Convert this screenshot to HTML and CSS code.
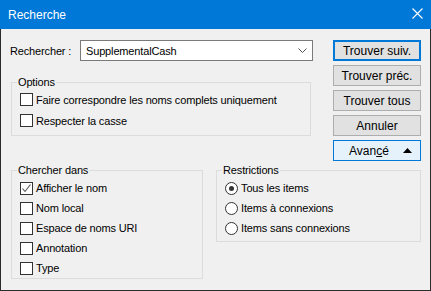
FILE: index.html
```html
<!DOCTYPE html>
<html lang="fr">
<head>
  <meta charset="UTF-8" />
  <title>Recherche</title>
  <link rel="stylesheet" href="styles.css">
</head>
<body>
  <div class="window">
    <div class="titlebar">
      <span class="title">Recherche</span>
      <svg class="close" width="11" height="11" viewBox="0 0 11 11">
        <path d="M0.5 0.5 L10.5 10.5 M10.5 0.5 L0.5 10.5" stroke="#fff" stroke-width="1.1" fill="none"/>
      </svg>
    </div>

    <div class="content">
      <div class="top">
        <div class="left-col">
          <div class="search-row">
            <span class="label">Rechercher :</span>
            <div class="combo">
              <span>SupplementalCash</span>
              <svg width="9" height="5" viewBox="0 0 9 5">
                <polyline points="0.5,0.5 4.5,4.5 8.5,0.5" stroke="#555" fill="none"/>
              </svg>
            </div>
          </div>

          <fieldset class="group options">
            <legend>Options</legend>
            <div class="row"><span class="box"></span>Faire correspondre les noms complets uniquement</div>
            <div class="row"><span class="box"></span>Respecter la casse</div>
          </fieldset>
        </div>

        <div class="buttons">
          <button class="btn default">Trouver suiv.</button>
          <button class="btn">Trouver préc.</button>
          <button class="btn">Trouver tous</button>
          <button class="btn">Annuler</button>
          <button class="btn advanced">Avan<u>c</u>é
            <svg class="arrow" width="9" height="5" viewBox="0 0 9 5"><polygon points="0,5 4.5,0 9,5" fill="#000"/></svg>
          </button>
        </div>
      </div>

      <div class="bottom">
        <fieldset class="group look-in">
          <legend>Chercher dans</legend>
          <div class="row small"><span class="box checked">
            <svg width="11" height="11" viewBox="0 0 11 11"><polyline points="1.5,5.5 4,8.5 9.5,1.5" stroke="#555" stroke-width="1.1" fill="none"/></svg>
          </span>Afficher le nom</div>
          <div class="row small"><span class="box"></span>Nom local</div>
          <div class="row small"><span class="box"></span>Espace de noms URI</div>
          <div class="row small"><span class="box"></span>Annotation</div>
          <div class="row small"><span class="box"></span>Type</div>
        </fieldset>

        <fieldset class="group restrictions">
          <legend>Restrictions</legend>
          <div class="row small"><span class="radio on"></span>Tous les items</div>
          <div class="row small"><span class="radio"></span>Items à connexions</div>
          <div class="row small"><span class="radio"></span>Items sans connexions</div>
        </fieldset>
      </div>
    </div>
  </div>
</body>
</html>
```

FILE: styles.css
```css
body {
  margin: 0;
  font-family: "Liberation Sans", Arial, sans-serif;
  font-size: 11px;
  letter-spacing: -0.15px;
  color: #000;
  background: #f0f0f0;
}
.window {
  width: 429px;
  height: 290px;
  border: 1px solid #2b2b2b;
  border-top: 0;
  background: #f0f0f0;
}
.titlebar {
  display: flex;
  align-items: center;
  justify-content: space-between;
  height: 29px;
  margin: 0 -1px;
  padding: 0 8px 0 8px;
  background: #0078d7;
  color: #fff;
  font-size: 12px;
  letter-spacing: 0;
}
.close {
  margin-top: -2px;
}
.content {
  padding: 11px 9px 0 9px;
}
.top {
  display: flex;
  align-items: flex-start;
}
.left-col {
  width: 303px;
}
.search-row {
  display: flex;
  align-items: center;
  height: 21px;
}
.label {
  width: 70px;
}
.combo {
  flex: 1;
  display: flex;
  align-items: center;
  justify-content: space-between;
  height: 19px;
  padding: 0 5px 0 5px;
  border: 1px solid #7a7a7a;
  background: #fff;
}
.group {
  margin: 0;
  border: 1px solid #dcdcdc;
  padding: 0 8px;
}
.group legend {
  padding: 0 1px;
  margin-left: -3px;
  line-height: 14px;
}
.options {
  margin: 14px 0 0 1px;
  width: 300px;
  box-sizing: border-box;
  padding-bottom: 4px;
}
.row {
  display: flex;
  align-items: center;
  gap: 3px;
  height: 21px;
  white-space: nowrap;
}
.row.small {
  height: 20px;
}
.box {
  display: flex;
  align-items: center;
  justify-content: center;
  width: 11px;
  height: 11px;
  border: 1px solid #333;
  background: #fff;
  flex-shrink: 0;
}
.radio {
  position: relative;
  width: 11px;
  height: 11px;
  border: 1px solid #333;
  border-radius: 50%;
  background: #fff;
  flex-shrink: 0;
}
.radio.on::after {
  content: "";
  position: absolute;
  left: 3px;
  top: 3px;
  width: 5px;
  height: 5px;
  border-radius: 50%;
  background: #333;
}
.buttons {
  display: flex;
  flex-direction: column;
  gap: 4px;
  margin-left: 20px;
}
.btn {
  width: 88px;
  height: 21px;
  padding: 0;
  font-family: inherit;
  font-size: 12px;
  letter-spacing: 0;
  color: #000;
  background: #e1e1e1;
  border: 1px solid #adadad;
}
.btn.default {
  border: 2px solid #0078d7;
}
.btn.advanced {
  display: flex;
  align-items: center;
  justify-content: center;
  position: relative;
  padding-right: 16px;
  background: #e5f1fb;
  border-color: #0078d7;
}
.arrow {
  position: absolute;
  right: 8px;
  top: 7px;
}
.bottom {
  display: flex;
  gap: 13px;
  margin-top: 2px;
}
.look-in {
  margin-left: 1px;
  width: 193px;
  box-sizing: border-box;
  padding-top: 1px;
}
.restrictions {
  width: 206px;
  box-sizing: border-box;
  padding-top: 1px;
  padding-bottom: 3px;
  align-self: flex-start;
}
```
